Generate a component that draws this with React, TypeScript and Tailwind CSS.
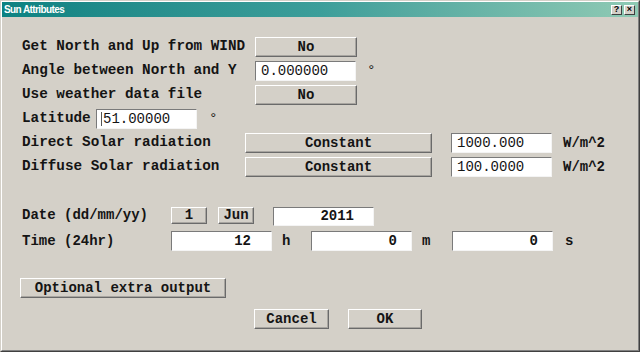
import React from 'react';

const btn =
  'flex items-center justify-center bg-[#d4d0c8] border border-t-white border-l-white border-r-[#6a6a6a] border-b-[#6a6a6a] shadow-[inset_-1px_-1px_0_#a8a5a0] font-bold text-[14px] text-[#141414]';
const field =
  'flex items-center bg-white border border-t-[#7a7a7a] border-l-[#7a7a7a] border-r-[#f4f4f4] border-b-[#f4f4f4] text-[14px] text-[#141414]';

function Btn({ className, children }: { className: string; children: React.ReactNode }) {
  return <div className={`${btn} ${className}`}>{children}</div>;
}

function Field({ className, children }: { className: string; children: React.ReactNode }) {
  return <div className={`${field} ${className}`}>{children}</div>;
}

export default function App() {
  return (
    <div className="w-[640px] h-[352px] bg-[#d4d0c8] border border-t-[#d4d0c8] border-l-[#d4d0c8] border-r-[#404040] border-b-[#404040] font-['Liberation_Mono',monospace]">
      <div className="h-full flex flex-col border border-t-white border-l-white border-r-[#808080] border-b-[#808080]">
        {/* title bar */}
        <div className="h-[15px] flex items-center justify-between bg-gradient-to-r from-[#0b8282] via-[#3c9e9a] to-[#8fcab4] pl-[2px] pr-[3px]">
          <span className="font-['Liberation_Sans',Arial,sans-serif] font-bold text-[10px] tracking-[-0.6px] text-white">
            Sun Attributes
          </span>
          <div className="flex gap-[2px]">
            <div className="w-[11px] h-[10px] flex items-center justify-center bg-[#d4d0c8] border border-t-white border-l-white border-r-[#404040] border-b-[#404040] font-['Liberation_Sans',Arial,sans-serif] font-bold text-[9px] leading-none text-black">
              ?
            </div>
            <div className="w-[11px] h-[10px] flex items-center justify-center bg-[#d4d0c8] border border-t-white border-l-white border-r-[#404040] border-b-[#404040] font-['Liberation_Sans',Arial,sans-serif] font-bold text-[9px] leading-none text-black">
              ×
            </div>
          </div>
        </div>

        {/* form */}
        <div className="flex flex-col pl-[18px] text-[#141414]">
          <div className="flex flex-col gap-[4px] mt-[20px] text-[14.3px] font-bold">
            <div className="flex items-center h-[20px]">
              <span className="w-[235px] pl-[2px]">Get North and Up from WIND</span>
              <Btn className="w-[102px] h-[20px]">No</Btn>
            </div>
            <div className="flex items-center h-[20px]">
              <span className="w-[235px] pl-[2px]">Angle between North and Y</span>
              <Field className="w-[101px] h-[20px] pl-[5px] font-normal">0.000000</Field>
              <span className="ml-[11px] self-start font-normal">°</span>
            </div>
            <div className="flex items-center h-[20px]">
              <span className="w-[235px] pl-[2px]">Use weather data file</span>
              <Btn className="w-[102px] h-[20px]">No</Btn>
            </div>
            <div className="flex items-center h-[20px]">
              <span className="w-[76px] pl-[2px]">Latitude</span>
              <Field className="w-[101px] h-[20px] pl-[4px] font-normal">
                <span className="w-[1px] h-[14px] bg-[#555] mr-[1px]" />
                51.00000
              </Field>
              <span className="ml-[12px] self-start font-normal">°</span>
            </div>
            <div className="flex items-center h-[20px]">
              <span className="w-[225px] pl-[2px]">Direct Solar radiation</span>
              <Btn className="w-[187px] h-[20px]">Constant</Btn>
              <Field className="ml-[19px] w-[101px] h-[20px] pl-[5px] font-normal">1000.000</Field>
              <span className="ml-[11px] text-[14px]">W/m^2</span>
            </div>
            <div className="flex items-center h-[20px]">
              <span className="w-[225px] pl-[2px]">Diffuse Solar radiation</span>
              <Btn className="w-[187px] h-[20px]">Constant</Btn>
              <Field className="ml-[19px] w-[101px] h-[20px] pl-[5px] font-normal">100.0000</Field>
              <span className="ml-[11px] text-[14px]">W/m^2</span>
            </div>
          </div>

          <div className="flex flex-col gap-[4px] mt-[30px] text-[14px] font-bold">
            <div className="flex items-start h-[20px]">
              <span className="w-[151px] h-[17px] flex items-center pl-[2px]">Date (dd/mm/yy)</span>
              <Btn className="w-[36px] h-[17px]">1</Btn>
              <Btn className="ml-[11px] w-[36px] h-[17px]">Jun</Btn>
              <Field className="ml-[19px] w-[101px] h-[19px] justify-end pr-[19px] font-bold">2011</Field>
            </div>
            <div className="flex items-center h-[20px]">
              <span className="w-[151px] pl-[2px]">Time (24hr)</span>
              <Field className="w-[101px] h-[20px] justify-end pr-[20px] font-bold">12</Field>
              <span className="w-[39px] pl-[10px]">h</span>
              <Field className="w-[101px] h-[20px] justify-end pr-[14px] font-bold">0</Field>
              <span className="w-[40px] pl-[10px]">m</span>
              <Field className="w-[101px] h-[20px] justify-end pr-[14px] font-bold">0</Field>
              <span className="pl-[12px]">s</span>
            </div>
          </div>

          <Btn className="mt-[27px] w-[206px] h-[20px]">Optional extra output</Btn>

          <div className="flex mt-[11px] pl-[234px]">
            <Btn className="w-[75px] h-[20px]">Cancel</Btn>
            <Btn className="ml-[19px] w-[74px] h-[20px]">OK</Btn>
          </div>
        </div>
      </div>
    </div>
  );
}
